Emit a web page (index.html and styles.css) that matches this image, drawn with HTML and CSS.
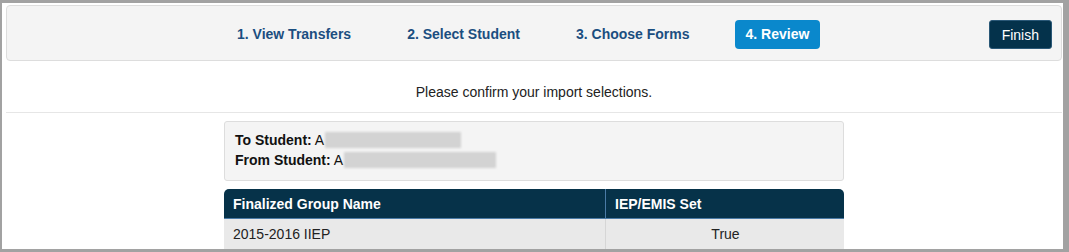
FILE: index.html
```html
<!DOCTYPE html>
<html>
<head>
<meta charset="utf-8">
<link rel="stylesheet" href="styles.css">
</head>
<body>
<div class="frame">
  <div class="nav">
    <div class="steps">
      <a class="step">1. View Transfers</a>
      <a class="step">2. Select Student</a>
      <a class="step">3. Choose Forms</a>
      <a class="step active">4. Review</a>
    </div>
    <button class="finish">Finish</button>
  </div>
  <div class="content">
    <div class="intro">Please confirm your import selections.</div>
    <div class="review">
      <div class="info">
        <div class="line"><b>To Student:</b> A<span class="redact redact-to"></span></div>
        <div class="line"><b>From Student:</b> A<span class="redact redact-from"></span></div>
      </div>
      <table class="groups">
        <thead>
          <tr><th class="c1">Finalized Group Name</th><th class="c2">IEP/EMIS Set</th></tr>
        </thead>
        <tbody>
          <tr><td class="c1">2015-2016 IIEP</td><td class="c2 center">True</td></tr>
        </tbody>
      </table>
    </div>
  </div>
</div>
</body>
</html>
```
FILE: styles.css
```css
html, body {
  margin: 0;
  padding: 0;
  background: #ffffff;
}
body {
  font-family: "Liberation Sans", Arial, sans-serif;
  font-size: 14px;
  color: #222222;
}
.frame {
  box-sizing: border-box;
  width: 1069px;
  height: 252px;
  border-style: solid;
  border-color: #a2a2a2;
  border-width: 3px 6px 3px 2px;
  background: #ffffff;
  overflow: hidden;
}
.nav {
  box-sizing: border-box;
  display: flex;
  align-items: flex-start;
  height: 56px;
  margin: 2px 1px 0 4px;
  padding: 14px 9px 0 219px;
  background: #f4f4f4;
  border: 1px solid #dddddd;
  border-radius: 4px;
}
.steps {
  display: flex;
  gap: 34px;
}
.step {
  display: block;
  height: 29px;
  line-height: 29px;
  padding: 0 11px;
  font-weight: bold;
  font-size: 14px;
  color: #1b4e80;
  border-radius: 4px;
  cursor: pointer;
}
.step.active {
  background: #0a88cc;
  color: #ffffff;
}
.finish {
  margin-left: auto;
  box-sizing: border-box;
  height: 29px;
  padding: 0 12px;
  background: #04324b;
  border: 1px solid #2a5877;
  border-radius: 3px;
  color: #ffffff;
  font-family: "Liberation Sans", Arial, sans-serif;
  font-size: 14px;
}
.content {
  margin: 0 1px 0 4px;
}
.intro {
  padding: 21px 0 10px;
  line-height: 20px;
  text-align: center;
  color: #222222;
  border-bottom: 1px solid #e6e6e6;
}
.review {
  width: 620px;
  margin: 8px auto 0;
}
.info {
  box-sizing: border-box;
  height: 60px;
  padding: 8px 10px 10px;
  background: #f4f4f4;
  border: 1px solid #dddddd;
  border-radius: 3px;
}
.line {
  height: 20px;
  line-height: 20px;
  color: #111111;
}
.redact {
  display: inline-block;
  height: 16px;
  vertical-align: -3px;
  background: #d3d3d3;
  filter: blur(1px);
  margin-left: 1px;
}
.redact-to { width: 136px; }
.redact-from { width: 152px; }
.groups {
  width: 620px;
  margin-top: 8px;
  border-collapse: separate;
  border-spacing: 0;
}
.groups th {
  height: 29px;
  padding: 0 8px 0 9px;
  background: #063249;
  color: #ffffff;
  font-weight: bold;
  text-align: left;
  border-bottom: 1px solid #4a7ba6;
}
.groups th.c1 {
  width: 364px;
  border-top-left-radius: 5px;
}
.groups th.c2 {
  border-left: 1px solid #4a7ba6;
  border-top-right-radius: 5px;
}
.groups td {
  height: 30px;
  padding: 0 8px 0 9px;
  background: #e9e9e9;
  color: #222222;
}
.groups td.c2 {
  border-left: 1px solid #d6d6d6;
}
.center {
  text-align: center;
}
```
